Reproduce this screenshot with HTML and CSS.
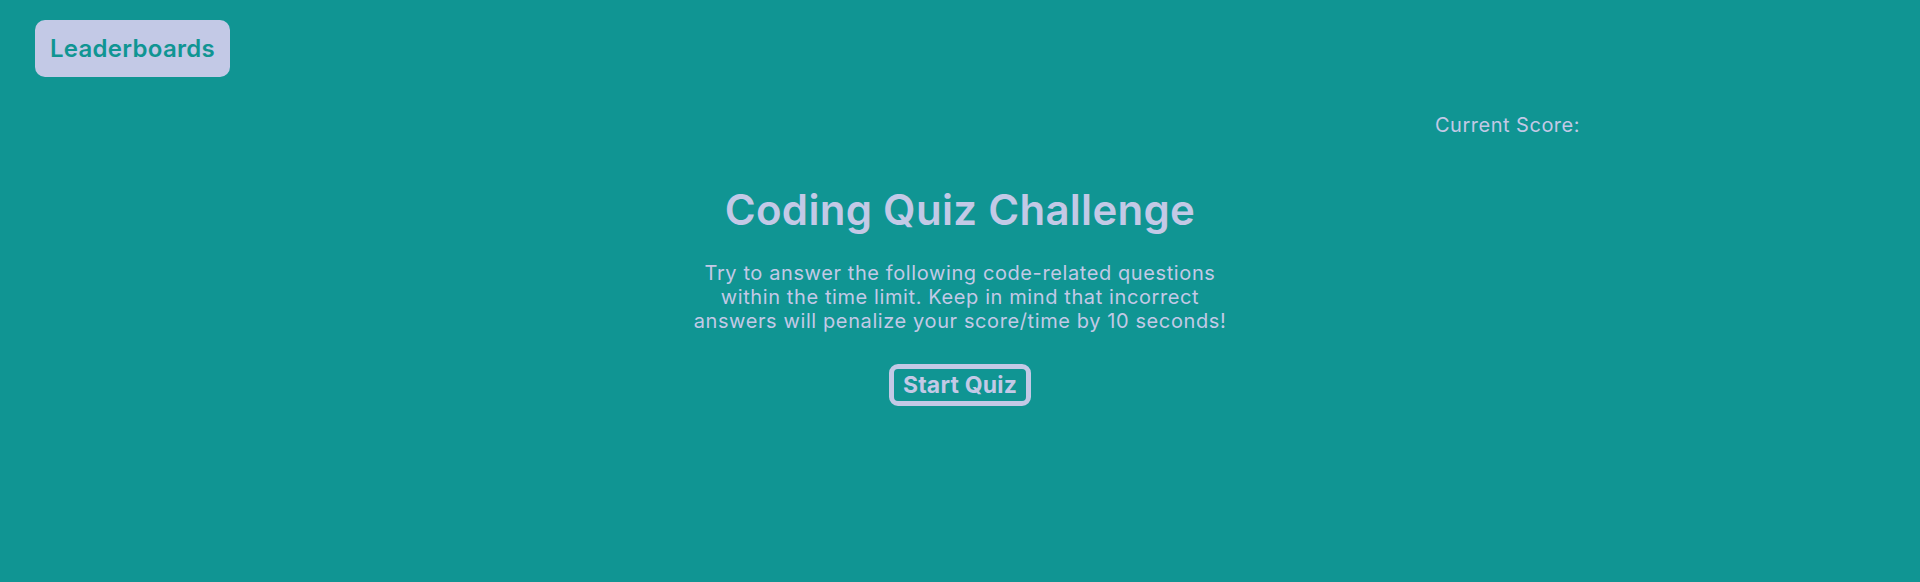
FILE: index.html
```html
<!DOCTYPE html>
<html lang="en">
<head>
<meta charset="utf-8">
<title>Coding Quiz Challenge</title>
<link rel="stylesheet" href="styles.css">
</head>
<body>
<header class="top">
  <button class="leader-btn">Leaderboards</button>
</header>
<div class="score-row">
  <span class="score">Current Score:</span>
</div>
<main class="intro">
  <h1 class="title">Coding Quiz Challenge</h1>
  <p class="desc">Try to answer the following code-related questions within the time limit. Keep in mind that incorrect answers will penalize your score/time by 10 seconds!</p>
  <button class="start-btn">Start Quiz</button>
</main>
</body>
</html>
```
FILE: styles.css
```css
html, body {
  margin: 0;
  padding: 0;
  height: 100%;
}
body {
  background: #109593;
  font-family: "Inter", "DejaVu Sans", sans-serif;
  color: #c3c9e6;
}
.top {
  display: flex;
  padding: 20px 0 0 35px;
}
.leader-btn {
  background: #c3c9e6;
  color: #109593;
  border: none;
  border-radius: 10px;
  font-family: inherit;
  font-size: 24px;
  letter-spacing: 0.3px;
  font-weight: 600;
  width: 195px;
  height: 57px;
  padding: 0;
}
.score-row {
  display: flex;
  justify-content: flex-end;
  padding-right: 340px;
  margin-top: 36px;
}
.score {
  font-size: 20px;
  letter-spacing: 0.5px;
  line-height: 24px;
}
.intro {
  display: flex;
  flex-direction: column;
  align-items: center;
}
.title {
  margin: 48px 0 0;
  font-size: 42px;
  font-weight: 600;
  line-height: 50px;
  letter-spacing: 0.3px;
}
.desc {
  margin: 26px 0 0;
  width: 545px;
  text-align: center;
  font-size: 20px;
  letter-spacing: 0.6px;
  line-height: 24px;
}
.start-btn {
  margin-top: 31px;
  background: transparent;
  border: 5px solid #c3c9e6;
  border-radius: 9px;
  color: #c3c9e6;
  font-family: inherit;
  font-size: 23px;
  font-weight: 700;
  letter-spacing: 0.2px;
  width: 142px;
  height: 42px;
  padding: 0;
}
```
